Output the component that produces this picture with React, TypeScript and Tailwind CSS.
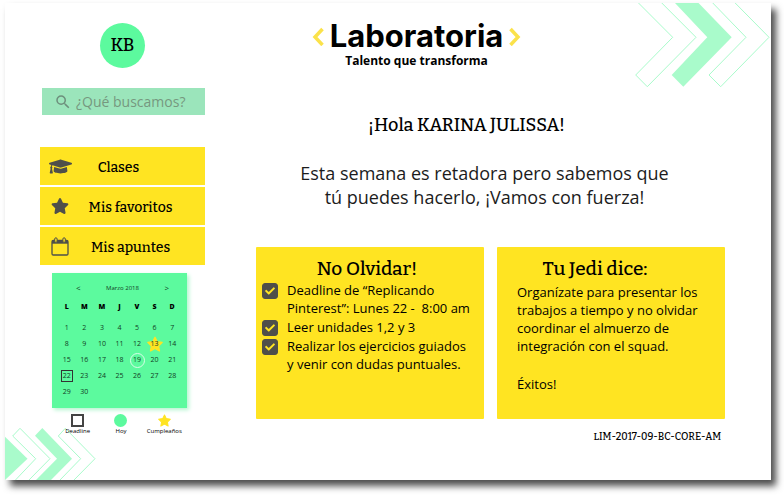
import type { ReactNode } from 'react';
import { FaCheck, FaGraduationCap, FaStar } from 'react-icons/fa';
import { MdSearch } from 'react-icons/md';

const SERIF = "font-['Bitter','DejaVu_Serif_Condensed','DejaVu_Serif',serif] font-medium";

const WEEKS: (number | null)[][] = [
  [1, 2, 3, 4, 5, 6, 7],
  [8, 9, 10, 11, 12, 13, 14],
  [15, 16, 17, 18, 19, 20, 21],
  [22, 23, 24, 25, 26, 27, 28],
  [29, 30, null, null, null, null, null],
];

function StarIcon({ size, className = '' }: { size: number; className?: string }) {
  return (
    <svg className={className} width={size} height={size} viewBox="0 0 20 20" aria-hidden="true">
      <path
        d="M10 1.500 12.800 7.100 19 8 14.500 12.400 15.600 18.600 10 15.600 4.400 18.600 5.500 12.400 1 8 7.200 7.100z"
        fill="currentColor"
        stroke="currentColor"
        strokeWidth="1.600"
        strokeLinejoin="round"
      />
    </svg>
  );
}

function CalendarIcon() {
  return (
    <svg width="18" height="19" viewBox="0 0 18 19" fill="none" stroke="#4f4f4a" aria-hidden="true">
      <rect x="1" y="3.5" width="16" height="14.5" rx="1.2" strokeWidth="1.3" />
      <path d="M1 3.5h16v3.2H1z" fill="#4f4f4a" stroke="none" />
      <rect x="3.7" y="0.8" width="2.4" height="4.6" rx="1.2" fill="#ffe422" strokeWidth="1" />
      <rect x="11.9" y="0.8" width="2.4" height="4.6" rx="1.2" fill="#ffe422" strokeWidth="1" />
    </svg>
  );
}

function TopChevrons() {
  return (
    <svg className="absolute top-0 right-0" width="136" height="86" viewBox="635 3 136 86" fill="none" aria-hidden="true">
      <path d="M638 2.5 672.7 37.3 635.7 75 647.3 86.7 696 37.3 661.3 2.5" stroke="#a9fbcb" strokeWidth="1" />
      <path d="M675 3h23.500L731.700 37.300 683.300 86.700 671.700 75 707.300 37.300z" fill="#a9fbcb" />
      <path d="M712.3 2.5 746 37.3 709 75l11.7 11.7L769 37.3 734.7 2.5" stroke="#a9fbcb" strokeWidth="1" />
    </svg>
  );
}

function BottomChevrons() {
  return (
    <svg className="absolute bottom-0 left-0" width="92" height="53" viewBox="5 427 92 53" fill="none" aria-hidden="true">
      <path d="M5 436.7 27.5 458.7 5 480z" fill="#a9fbcb" />
      <path d="M15 480.5 35.7 458.7 12.7 436 20 428.3 50 458.7 28.5 480.5" stroke="#a9fbcb" strokeWidth="1" />
      <path d="M35 435.7 42.3 428 72 458.7 51 480H36l21-21.3z" fill="#a9fbcb" />
      <path d="M59.5 480.5 80.7 458.7 58.3 436l7-7.7L95 458.7 73.5 480.5" stroke="#a9fbcb" strokeWidth="1" />
    </svg>
  );
}

function NavItem({ icon, children, textClass = 'pr-4' }: { icon: ReactNode; children: ReactNode; textClass?: string }) {
  return (
    <li>
      <a href="#" className="flex h-[38px] items-center bg-[#ffe422] pl-2 text-[#4f4f4a]">
        <span className="flex w-6 justify-center">{icon}</span>
        <span className={`flex-1 pt-0.5 text-center text-[14px] text-black ${SERIF} ${textClass}`}>{children}</span>
      </a>
    </li>
  );
}

function Day({ day }: { day: number }) {
  if (day === 13) {
    return (
      <span className="inline-grid size-4 place-items-center align-middle">
        <StarIcon className="col-start-1 row-start-1 text-[#ffe422]" size={16} />
        <span className="col-start-1 row-start-1">13</span>
      </span>
    );
  }
  if (day === 19) {
    return <span className="inline-flex size-[15px] items-center justify-center rounded-full border border-[#d9fde8] align-middle">19</span>;
  }
  if (day === 22) {
    return <span className="inline-flex size-3 items-center justify-center border border-[#333] align-middle">22</span>;
  }
  return <>{day}</>;
}

function Calendar() {
  return (
    <section className="mt-2 mr-[18px] ml-3 h-[135px] bg-[#5cfa9e] px-1.5 text-[7px] text-[#123d25] shadow-[2px_2px_4px_#b5f5d0]">
      <div className="flex h-[30px] items-center justify-between pr-3 pl-[18px] text-[6px] font-medium">
        <button type="button" aria-label="Mes anterior" className="text-[8px]">&lt;</button>
        <h2>Marzo 2018</h2>
        <button type="button" aria-label="Mes siguiente" className="text-[8px]">&gt;</button>
      </div>
      <table className="w-full table-fixed text-center leading-none">
        <thead>
          <tr className="h-[17px] align-top text-black">
            {['L', 'M', 'M', 'J', 'V', 'S', 'D'].map((d, i) => (
              <th key={i} className="p-0 font-extrabold">{d}</th>
            ))}
          </tr>
        </thead>
        <tbody>
          {WEEKS.map((week, i) => (
            <tr key={i} className="h-4">
              {week.map((day, j) => (
                <td key={j} className="h-4 p-0 align-middle leading-[0]">{day !== null && <Day day={day} />}</td>
              ))}
            </tr>
          ))}
        </tbody>
      </table>
    </section>
  );
}

function Task({ id, children }: { id: string; children: ReactNode }) {
  return (
    <li className="flex gap-[9px]">
      <span className="mt-0.5 grid size-4 shrink-0 place-items-center">
        <input
          id={id}
          type="checkbox"
          defaultChecked
          className="peer col-start-1 row-start-1 size-4 appearance-none rounded-[3px] border border-[#4f4f4a] checked:bg-[#4f4f4a]"
        />
        <FaCheck className="pointer-events-none invisible col-start-1 row-start-1 text-[#ffe422] peer-checked:visible" size={10} />
      </span>
      <label htmlFor={id} className="whitespace-nowrap">{children}</label>
    </li>
  );
}

export default function App() {
  return (
    <div className="bg-white pt-[3px] pr-[13px] pb-[15px] pl-[5px] font-['Open_Sans','Noto_Sans',sans-serif] text-black">
      <div className="relative flex min-h-[477px] bg-white shadow-[5px_6px_7px_rgba(0,0,0,0.7)]">
        <TopChevrons />
        <BottomChevrons />

        <aside className="relative ml-[35px] w-[165px] shrink-0 pt-5">
          <div className={`mx-auto flex size-[45px] items-center justify-center rounded-full bg-[#5cfa9e] text-[18px] ${SERIF}`}>
            KB
          </div>
          <form role="search" className="mt-5 ml-0.5 flex h-[27px] items-center gap-1 bg-[#9be5bb] pl-3 text-[#6d8f7c]">
            <label htmlFor="buscar" aria-label="Buscar"><MdSearch size={18} /></label>
            <input
              id="buscar"
              type="search"
              placeholder="¿Qué buscamos?"
              className="w-full min-w-0 bg-transparent text-[14px] outline-none placeholder:text-[#76987f]"
            />
          </form>
          <nav className="mt-8">
            <ul className="flex flex-col gap-0.5">
              <NavItem icon={<FaGraduationCap size={23} />} textClass="pr-10">Clases</NavItem>
              <NavItem icon={<FaStar size={18} />}>Mis favoritos</NavItem>
              <NavItem icon={<CalendarIcon />}>Mis apuntes</NavItem>
            </ul>
          </nav>
          <Calendar />
          <ul className="mt-1.5 ml-4 flex w-[130px] text-[6px] leading-2">
            <li className="flex flex-1 flex-col items-center">
              <span className="size-[13px] border-2 border-[#444]" />
              Deadline
            </li>
            <li className="flex flex-1 flex-col items-center">
              <span className="size-[13px] rounded-full bg-[#5cfa9e]" />
              Hoy
            </li>
            <li className="flex flex-1 flex-col items-center">
              <StarIcon className="text-[#ffe422]" size={13} />
              Cumpleaños
            </li>
          </ul>
        </aside>

        <main className="relative mr-[46px] ml-[51px] flex-1">
          <header className="flex flex-col items-center pt-[17px] pr-[148px]">
            <div className="flex items-center gap-1.5">
              <svg width="12" height="20" viewBox="0 0 12 20" fill="none" stroke="#fbe24a" strokeWidth="3.500" aria-hidden="true">
                <path d="M10.500 3 3 11l7.500 8" />
              </svg>
              <h1 className="font-['Inter',sans-serif] text-[31px] leading-8 font-bold">Laboratoria</h1>
              <svg width="12" height="20" viewBox="0 0 12 20" fill="none" stroke="#fbe24a" strokeWidth="3.500" aria-hidden="true">
                <path d="M1.500 3 9 11l-7.500 8" />
              </svg>
            </div>
            <p className="mt-px text-[12px] leading-4 font-bold">Talento que transforma</p>
          </header>

          <h2 className={`mt-11 pr-12 text-center text-[18px] leading-6 ${SERIF}`}>¡Hola KARINA JULISSA!</h2>
          <p className="mt-6 pr-3 text-center text-[18px] leading-6 text-[#1c1c1c]">
            Esta semana es retadora pero sabemos que
            <br />
            tú puedes hacerlo, ¡Vamos con fuerza!
          </p>

          <div className="mt-[38px] grid grid-cols-2 gap-[13px] text-[13px] leading-[18px]">
            <section className="min-h-[172px] rounded-[1px] bg-[#ffe422] pt-2.5 pl-1.5">
              <h3 className={`pr-3 text-center text-[19px] leading-6 ${SERIF}`}>No Olvidar!</h3>
              <ul className="flex flex-col gap-px">
                <Task id="deadline">
                  Deadline de “Replicando
                  <br />
                  Pinterest”: Lunes 22 - &nbsp;8:00 am
                </Task>
                <Task id="leer">Leer unidades 1,2 y 3</Task>
                <Task id="ejercicios">
                  Realizar los ejercicios guiados
                  <br />y venir con dudas puntuales.
                </Task>
              </ul>
            </section>
            <section className="min-h-[172px] rounded-[1px] bg-[#ffe422] pt-2.5 pl-5">
              <h3 className={`pr-[52px] text-center text-[19px] leading-6 ${SERIF}`}>Tu Jedi dice:</h3>
              <p className="mt-0.5 whitespace-nowrap">
                Organízate para presentar los
                <br />
                trabajos a tiempo y no olvidar
                <br />
                coordinar el almuerzo de
                <br />
                integración con el squad.
              </p>
              <p className="mt-5">Éxitos!</p>
            </section>
          </div>
          <footer className={`mt-2.5 pr-1 text-right text-[10px] leading-4 ${SERIF}`}>LIM-2017-09-BC-CORE-AM</footer>
        </main>
      </div>
    </div>
  );
}
